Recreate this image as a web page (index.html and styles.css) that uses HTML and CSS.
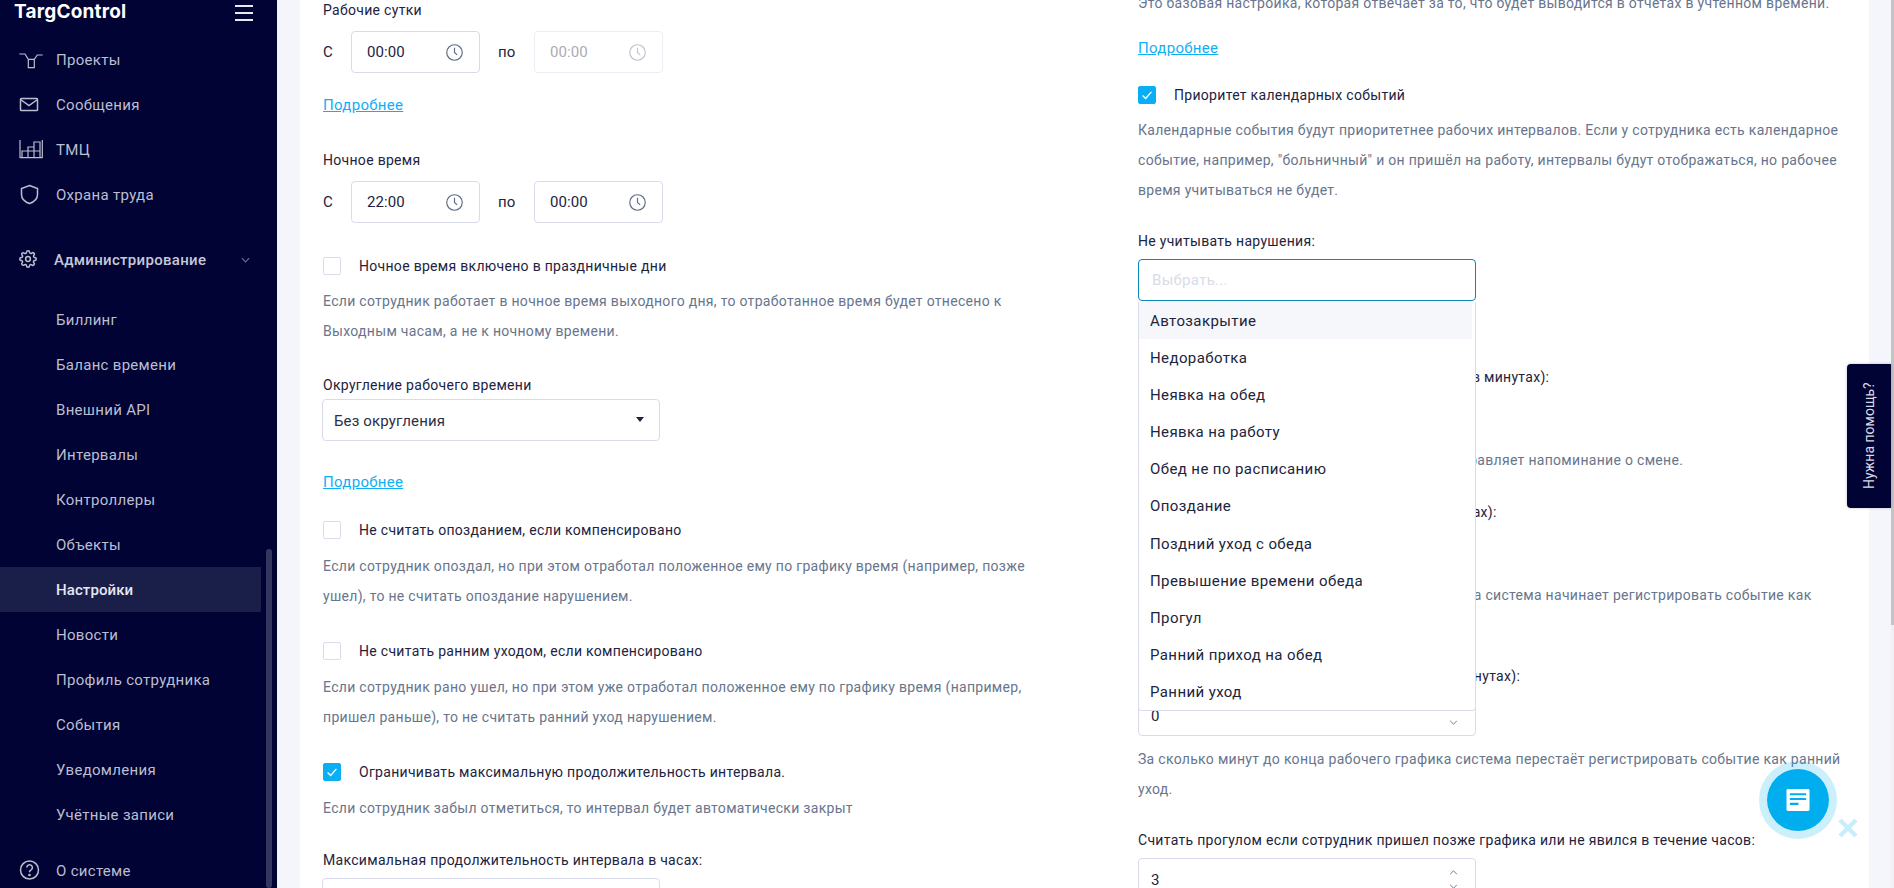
FILE: index.html
```html
<!DOCTYPE html>
<html lang="ru">
<head>
<meta charset="utf-8">
<title>TargControl</title>
<link rel="stylesheet" href="styles.css">
</head>
<body>
<div class="page">
  <aside class="sidebar">
    <div class="brand">
      <span class="logo">TargControl</span>
      <span class="burger"><i></i><i></i><i></i></span>
    </div>
    <nav class="nav nav-top">
      <a class="nav-item"><svg class="ico ico-thin" viewBox="0 0 24 24"><path d="M.3 6H6l3.300 5.300h6L18.300 7h5.400M9.300 11.300v8.400h6v-8.400"/></svg>Проекты</a>
      <a class="nav-item"><svg class="ico" viewBox="0 0 24 24"><rect x="1.500" y="5.500" width="17" height="12" rx=".8"/><path d="M1.500 6.500l8.500 6 8.500-6"/></svg>Сообщения</a>
      <a class="nav-item"><svg class="ico ico-thin" viewBox="0 0 24 24"><path d="M1 2v18M23.300 2v18M1 19.700h22.300M3 19.700V13h18v6.700M9 19.700V13M15 19.700V13M9 13V9h6v4M15 9V4h6v9"/></svg>ТМЦ</a>
      <a class="nav-item"><svg class="ico" viewBox="0 0 24 24"><path d="M10.500 2.500l8 3v6c0 4.500-3.500 7.500-8 9-4.500-1.500-8-4.500-8-9v-6z"/></svg>Охрана труда</a>
    </nav>
    <a class="nav-item nav-admin"><svg class="ico ico-gear" viewBox="0 0 24 24"><circle cx="12" cy="12" r="3.200"/><path d="M19.400 15a1.700 1.700 0 0 0 .3 1.800l.1.100a2 2 0 1 1-2.900 2.900l-.1-.1a1.700 1.700 0 0 0-2.800 1.200V21a2 2 0 1 1-4 0v-.1a1.700 1.700 0 0 0-2.900-1.200l-.1.100a2 2 0 1 1-2.800-2.900l.1-.1a1.700 1.700 0 0 0-1.200-2.800H3a2 2 0 1 1 0-4h.1a1.700 1.700 0 0 0 1.200-2.900l-.1-.1a2 2 0 1 1 2.900-2.800l.1.100a1.700 1.700 0 0 0 1.800.3h.1a1.700 1.700 0 0 0 1-1.500V3a2 2 0 1 1 4 0v.1a1.700 1.700 0 0 0 2.800 1.200l.1-.1a2 2 0 1 1 2.900 2.800l-.1.100a1.700 1.700 0 0 0-.3 1.800v.1a1.700 1.700 0 0 0 1.500 1H21a2 2 0 1 1 0 4h-.1a1.700 1.700 0 0 0-1.500 1z"/></svg>Администрирование<svg class="admin-chevron" viewBox="0 0 10 6"><path d="M1 1l4 4 4-4"/></svg></a>
    <nav class="nav nav-sub">
      <a class="nav-item">Биллинг</a>
      <a class="nav-item">Баланс времени</a>
      <a class="nav-item">Внешний API</a>
      <a class="nav-item">Интервалы</a>
      <a class="nav-item">Контроллеры</a>
      <a class="nav-item">Объекты</a>
      <a class="nav-item active">Настройки</a>
      <a class="nav-item">Новости</a>
      <a class="nav-item">Профиль сотрудника</a>
      <a class="nav-item">События</a>
      <a class="nav-item">Уведомления</a>
      <a class="nav-item">Учётные записи</a>
    </nav>
    <a class="nav-item nav-about"><svg class="ico" viewBox="0 0 24 24"><circle cx="10.500" cy="11" r="9"/><path d="M7.800 8.500a2.800 2.800 0 1 1 4.300 2.400c-1 .6-1.600 1.200-1.600 2.300"/><circle class="dot" cx="10.500" cy="16" r=".6"/></svg>О системе</a>
    <span class="side-thumb"></span>
  </aside>

  <main class="main">
    <div class="card">
      <section class="col">
        <div class="label">Рабочие сутки</div>
        <div class="time-row">
          <span>С</span>
          <span class="time"><span>00:00</span><svg class="clock" viewBox="0 0 16 16"><circle cx="8" cy="8" r="7.300"/><path d="M8 3.500V8l2.500 2.200"/></svg></span>
          <span class="time-to">по</span>
          <span class="time disabled"><span>00:00</span><svg class="clock" viewBox="0 0 16 16"><circle cx="8" cy="8" r="7.300"/><path d="M8 3.500V8l2.500 2.200"/></svg></span>
        </div>
        <a class="more more-a">Подробнее</a>
        <div class="label label-night">Ночное время</div>
        <div class="time-row">
          <span>С</span>
          <span class="time"><span>22:00</span><svg class="clock" viewBox="0 0 16 16"><circle cx="8" cy="8" r="7.300"/><path d="M8 3.500V8l2.500 2.200"/></svg></span>
          <span class="time-to">по</span>
          <span class="time"><span>00:00</span><svg class="clock" viewBox="0 0 16 16"><circle cx="8" cy="8" r="7.300"/><path d="M8 3.500V8l2.500 2.200"/></svg></span>
        </div>
        <div class="check check-first"><span class="box"></span>Ночное время включено в праздничные дни</div>
        <p class="help help-first">Если сотрудник работает в ночное время выходного дня, то отработанное время будет отнесено к Выходным часам, а не к ночному времени.</p>
        <div class="label label-round">Округление рабочего времени</div>
        <div class="select"><span>Без округления</span><i class="caret"></i></div>
        <a class="more more-b">Подробнее</a>
        <div class="check check-b"><span class="box"></span>Не считать опозданием, если компенсировано</div>
        <p class="help">Если сотрудник опоздал, но при этом отработал положенное ему по графику время (например, позже ушел), то не считать опоздание нарушением.</p>
        <div class="check check-next"><span class="box"></span>Не считать ранним уходом, если компенсировано</div>
        <p class="help">Если сотрудник рано ушел, но при этом уже отработал положенное ему по графику время (например, пришел раньше), то не считать ранний уход нарушением.</p>
        <div class="check check-next"><span class="box on"><svg viewBox="0 0 18 18"><path d="M4 9.500l3.500 3.500L14 5.500"/></svg></span>Ограничивать максимальную продолжительность интервала.</div>
        <p class="help">Если сотрудник забыл отметиться, то интервал будет автоматически закрыт</p>
        <div class="label label-max">Максимальная продолжительность интервала в часах:</div>
        <div class="number number-left"></div>
      </section>

      <section class="col col-right">
        <p class="help help-top">Это базовая настройка, которая отвечает за то, что будет выводится в отчетах в учтенном времени.</p>
        <a class="more more-c">Подробнее</a>
        <div class="check check-c"><span class="box on"><svg viewBox="0 0 18 18"><path d="M4 9.500l3.500 3.500L14 5.500"/></svg></span>Приоритет календарных событий</div>
        <p class="help help-c">Календарные события будут приоритетнее рабочих интервалов. Если у сотрудника есть календарное событие, например, "больничный" и он пришёл на работу, интервалы будут отображаться, но рабочее время учитываться не будет.</p>
        <div class="label label-d">Не учитывать нарушения:</div>
        <div class="multi">
          <div class="multi-input">Выбрать...</div>
          <ul class="menu">
            <li class="hover">Автозакрытие</li>
            <li>Недоработка</li>
            <li>Неявка на обед</li>
            <li>Неявка на работу</li>
            <li>Обед не по расписанию</li>
            <li>Опоздание</li>
            <li>Поздний уход с обеда</li>
            <li>Превышение времени обеда</li>
            <li>Прогул</li>
            <li>Ранний приход на обед</li>
            <li>Ранний уход</li>
          </ul>
        </div>
        <div class="label label-e">Напоминание о начале смены отправляется за (в минутах):</div>
        <div class="number"></div>
        <p class="help help-e">За сколько минут до начала смены система отправляет напоминание о смене.</p>
        <div class="label label-f">Порог фиксации опоздания сотрудника (в минутах):</div>
        <div class="number"></div>
        <p class="help help-f">Через сколько минут от начала рабочего графика система начинает регистрировать событие как опоздание.</p>
        <div class="label label-g">Порог фиксации раннего ухода сотрудника (в минутах):</div>
        <div class="number"><span>0</span><span class="spin"><svg viewBox="0 0 10 6"><path d="M1 5l4-4 4 4"/></svg><svg viewBox="0 0 10 6"><path d="M1 1l4 4 4-4"/></svg></span></div>
        <p class="help help-f">За сколько минут до конца рабочего графика система перестаёт регистрировать событие как ранний уход.</p>
        <div class="label label-g">Считать прогулом если сотрудник пришел позже графика или не явился в течение часов:</div>
        <div class="number"><span>3</span><span class="spin"><svg viewBox="0 0 10 6"><path d="M1 5l4-4 4 4"/></svg><svg viewBox="0 0 10 6"><path d="M1 1l4 4 4-4"/></svg></span></div>
      </section>
    </div>
  </main>

  <div class="page-scroll"><span></span></div>

  <a class="help-tab">Нужна помощь?</a>
  <a class="chat"><svg viewBox="0 0 24 24"><rect x="0" y="0" width="24" height="23" rx="1.500" class="chat-sheet"/><path d="M3.500 5.500h17M3.500 10.500h17M3.500 15.500h9" class="chat-lines"/></svg></a>
  <svg class="chat-close" viewBox="0 0 22 22"><path d="M3 3l16 16M19 3L3 19"/></svg>
</div>
</body>
</html>
```

FILE: styles.css
```css
* { box-sizing: border-box; }
html, body { margin: 0; height: 888px; overflow: hidden; }
body { font-family: Roboto, "Liberation Sans", sans-serif; font-size: 14px; letter-spacing: .3px; color: #1d2340; background: #f5f6fb; }
p, ul { margin: 0; padding: 0; }
a { display: block; }

.page { display: flex; height: 888px; overflow: hidden; position: relative; }

/* Sidebar */
.sidebar { position: relative; flex: 0 0 277px; height: 888px; background: #000333; overflow: hidden; color: #bcbed0; font-size: 15px; }
.brand { display: flex; align-items: center; justify-content: space-between; height: 24px; padding: 0 24px 0 14px; }
.logo { font-family: Inter, Roboto, sans-serif; font-weight: 700; font-size: 19px; letter-spacing: .2px; color: #fff; line-height: 24px; }
.burger { display: flex; flex-direction: column; gap: 5px; width: 18px; margin-top: 2px; }
.burger i { display: block; height: 2px; background: #e8e9f2; }
.nav-top { margin-top: 13px; }
.nav-item { display: flex; align-items: center; height: 45px; padding-left: 56px; position: relative; }
.ico { position: absolute; left: 19px; top: 11px; width: 24px; height: 24px; fill: none; stroke: #bcbed0; stroke-width: 1.500; }
.ico-thin { stroke-width: 1.200; }
.ico .dot { fill: #bcbed0; }
.ico-gear { left: 19px; width: 18px; height: 18px; top: 13px; stroke-width: 2; }
.nav-admin { margin-top: 20px; padding-left: 54px; color: #c6c8d8; font-weight: 500; }
.admin-chevron { position: absolute; left: 241px; top: 20px; width: 9px; height: 6px; fill: none; stroke: #6a6e8e; stroke-width: 1.300; }
.nav-sub { margin-top: 15px; }
.nav-sub .active { width: 261px; color: #e6e7f0; background: #1a1f4a; font-weight: 500; letter-spacing: .1px; }
.nav-about { margin-top: 11px; }
.side-thumb { position: absolute; right: 5px; top: 549px; width: 6px; height: 339px; background: #333760; border-radius: 3px; }

/* Main */
.main { flex: 1; min-width: 0; padding: 0 22px 0 23px; }
.card { display: flex; background: #fff; height: 888px; overflow: hidden; padding: 0 0 0 23px; }
.col { flex: 0 0 815px; padding-right: 95px; }
.col-right { flex: 0 0 712px; padding-right: 0; }

.label { line-height: 20px; margin-bottom: 8px; white-space: nowrap; }
.time-row { display: flex; align-items: center; height: 42px; margin-top: 11px; font-size: 15px; letter-spacing: .1px; }
.time-row > span:first-child { width: 28px; }
.time { display: flex; align-items: center; justify-content: space-between; width: 129px; height: 42px; padding: 0 16px 0 15px; border: 1px solid #d9dbec; border-radius: 4px; }
.time.disabled { border-color: #eceef6; color: #a9acb8; }
.time-to { width: 54px; text-align: left; padding-left: 18px; }
.clock { width: 17px; height: 17px; fill: none; stroke: #5f6d85; stroke-width: 1.100; }
.disabled .clock { stroke: #bfc3cf; }

.more { font-size: 15px; line-height: 20px; color: #10aef5; text-decoration: underline; width: max-content; }
.more-a { margin-top: 22px; }
.more-b { margin-top: 31px; }
.more-c { margin-top: 20px; }
.label-night { margin: 35px 0 0; }
.label-round { margin-top: 29px; margin-bottom: 4px; }
.label-max { margin-top: 27px; }

.check { display: flex; align-items: center; height: 20px; line-height: 20px; }
.check-first { margin-top: 33px; }
.check-b { margin-top: 28px; }
.check-next { margin-top: 30px; }
.check-c { margin-top: 27px; }
.box { flex: 0 0 18px; height: 18px; margin-right: 18px; border: 1px solid #dadcee; border-radius: 2px; background: #fff; }
.box.on { background: #0aaef5; border-color: #0aaef5; }
.box svg { display: block; width: 16px; height: 16px; fill: none; stroke: #fff; stroke-width: 1.500; }

.help { color: #68758c; line-height: 30px; margin-top: 11px; }
.help-first { margin-top: 10px; }
.help-top { margin-top: -12px; }
.help-c { margin-top: 10px; }

.select { display: flex; align-items: center; justify-content: space-between; width: 338px; height: 42px; margin-left: -1px; padding: 2px 15px 0 11px; border: 1px solid #d9dbec; border-radius: 4px; font-size: 15px; letter-spacing: .15px; color: #2b2f45; }
.caret { width: 0; height: 0; border: 4px solid transparent; border-top: 5px solid #1d2340; border-bottom: 0; margin-top: -4px; }

.number { display: flex; align-items: center; justify-content: space-between; width: 338px; height: 42px; padding: 0 17px 0 12px; border: 1px solid #d9dbec; border-radius: 4px; font-size: 15px; }
.number > span:first-child { padding-top: 2px; }
.number-left { margin-left: -1px; }
.spin { display: flex; flex-direction: column; gap: 9px; }
.spin svg { display: block; width: 9px; height: 5px; fill: none; stroke: #5f6d85; stroke-width: 1.100; }

.label-d { margin-top: 26px; }
.multi { position: relative; width: 338px; }
.multi-input { height: 42px; line-height: 40px; padding: 0 13px; border: 1px solid #0a86bb; border-radius: 4px; font-size: 15px; color: #d8dbea; background: #fff; }
.menu { position: absolute; left: 0; right: 0; top: 43px; z-index: 3; list-style: none; height: 409px; padding-right: 3px; background: #fff; border: 1px solid #dadcee; border-top: 0; border-radius: 0 0 4px 4px; font-size: 15px; letter-spacing: .4px; }
.menu li { height: 37.100px; line-height: 38px; padding-left: 11px; color: #20243c; }
.menu .hover { background: #f6f7fb; }

.label-e { margin-top: 66px; }
.help-e { margin-top: 8px; }
.label-f { margin-top: 27px; }
.help-f { margin-top: 8px; }
.label-g { margin-top: 26px; }

/* Page scrollbar */
.page-scroll { flex: 0 0 3px; height: 888px; background: #f1f1f1; }
.page-scroll span { display: block; height: 625px; background: #c4c4c4; }

/* Floating */
.help-tab { position: absolute; left: 1847px; top: 364px; width: 44px; height: 144px; display: flex; align-items: center; justify-content: center; background: #000333; color: #d8d9e4; box-shadow: 0 0 3px rgba(0,0,0,.25); writing-mode: vertical-rl; transform: rotate(180deg); border-radius: 0 4px 4px 0; font-size: 14px; letter-spacing: 0; }
.chat { position: absolute; left: 1759px; top: 761px; width: 78px; height: 78px; display: flex; align-items: center; justify-content: center; background: #00aeef; background-clip: padding-box; border: 8px solid rgba(0,174,239,.2); border-radius: 50%; }
.chat svg { width: 24px; height: 23px; }
.chat-sheet { fill: #fff; }
.chat-lines { fill: none; stroke: #00aeef; stroke-width: 2.200; }
.chat-close { position: absolute; left: 1837px; top: 817px; width: 22px; height: 22px; fill: none; stroke: #c9eefb; stroke-width: 4.500; }
```
